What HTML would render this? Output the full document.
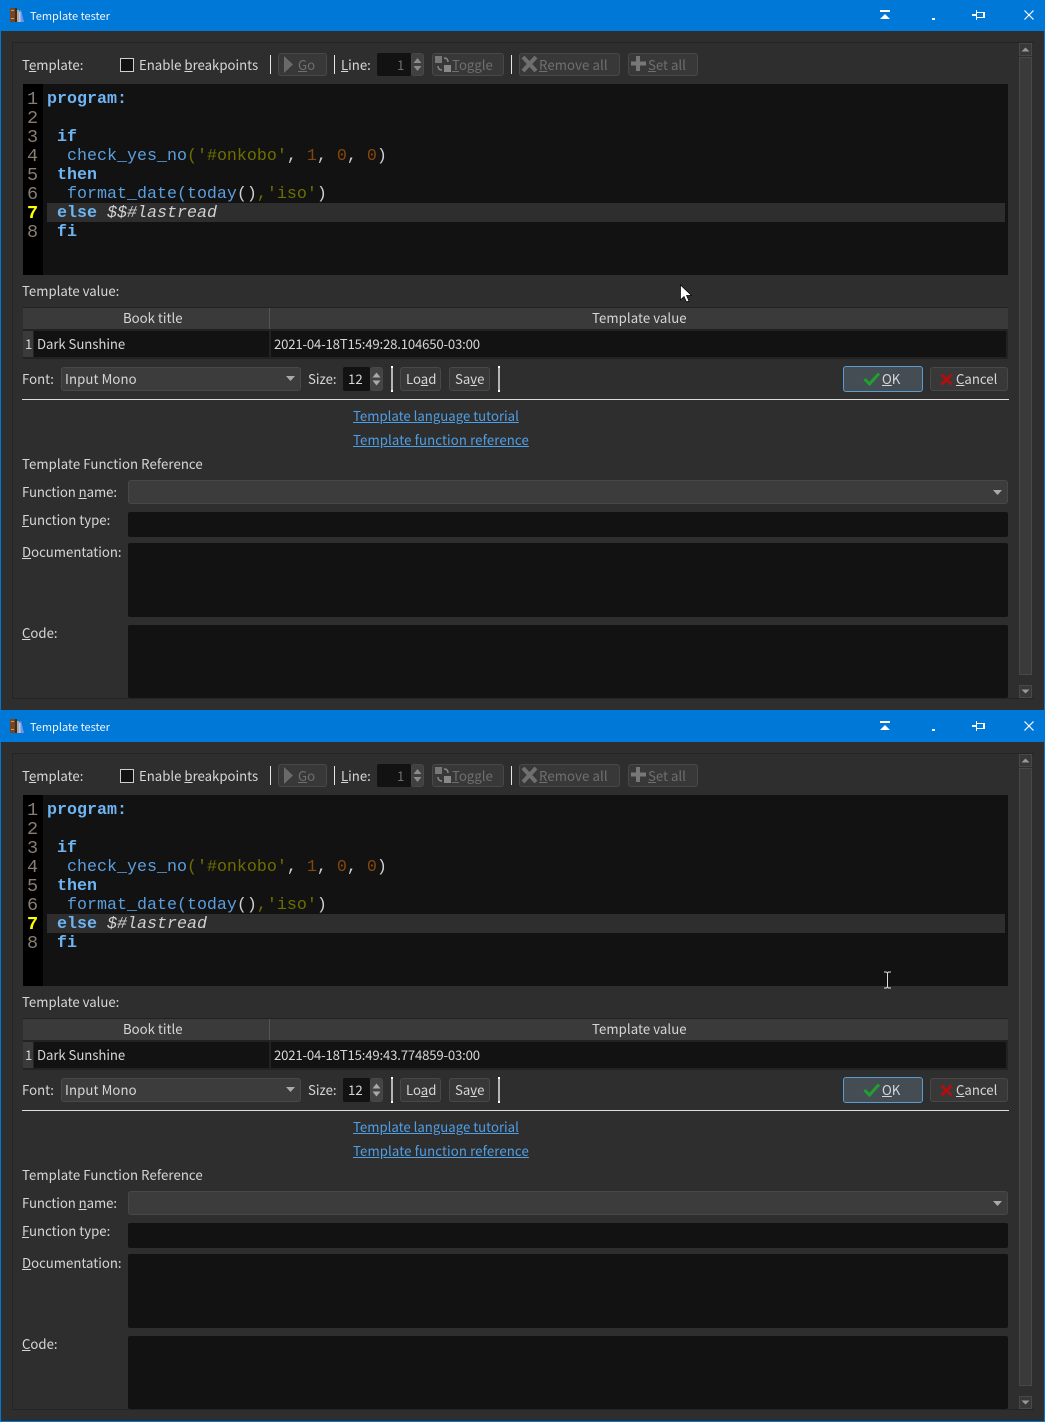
<!DOCTYPE html>
<html><head><meta charset="utf-8"><style>
html,body{margin:0;padding:0;background:#2d2d2d;width:1045px;height:1422px;overflow:hidden}
.w{position:absolute;left:0;width:1045px;height:711px;background:#2e2e2e;box-sizing:border-box;overflow:hidden}
.w *{position:absolute;box-sizing:border-box}
.w u,.w span{position:static}
.t{font:13.2px/18px "Noto Sans CJK JP","Liberation Sans",sans-serif;color:#d6d6d6;white-space:pre;margin-top:-1px}
.d{color:#6f6f6f}
.b{border:1px solid #484848;border-radius:3px;background:#383838}
.f{background:#121212;border-radius:2px}
.s{background:#e6e6e6;width:1px}
.p{width:2px;height:26px;top:366px;background:linear-gradient(#fff 0,#fff 2px,#b4b4b4 2px,#b4b4b4 24px,#fff 24px)}
.m{font:16.67px/19px "Liberation Mono",monospace;white-space:pre;color:#d0d0d0;margin-top:1px}
.k{font-weight:bold;color:#6fb5f4}
.n{color:#5b9fdf}.o{color:#6e6e00}.h{color:#84460c}
.l{color:#8a7c70;left:27px;font-size:18.500px;margin-top:1px}
a{color:#4f9fe6;text-decoration:underline}
</style></head><body>

<div class="w" style="top:0">
<div style="left:0;top:0;width:1px;height:711px;background:#0078d7"></div>
<div style="right:0;top:0;width:1px;height:711px;background:#0078d7"></div>
<div style="left:0;top:710px;width:1045px;height:1px;background:#0078d7"></div>
<div style="left:0;top:0;width:1045px;height:31px;background:#0078d7"></div>
<svg style="left:9px;top:7px" width="16" height="16"><rect x="1" y="1" width="5" height="14" fill="#7a4420"/><rect x="2" y="3" width="3" height="1" fill="#c8a060"/><rect x="2" y="11" width="3" height="1" fill="#c8a060"/><rect x="6" y="1" width="2" height="14" fill="#3a2c20"/><rect x="8" y="3" width="2" height="12" fill="#b0a890"/><path d="M10 4l2-1 3 12h-4z" fill="#6f94e8"/><path d="M10 5h1.500v10H10z" fill="#b4c8f4"/></svg>
<div class="t" style="left:30px;top:8px;color:#f0f6fc;font-size:11px">Template tester</div>
<svg style="left:875px;top:5px" width="165" height="20" fill="#fff"><rect x="5" y="5" width="10" height="2"/><path d="M5 14l5-5 5 5z"/><rect x="57" y="13" width="3" height="2"/><path d="M97 9h4V5h1v2h8v6h-8v2h-1v-4h-4zM102 8v4h6V8z"/><path d="M149.500 5.500l9 9M158.500 5.500l-9 9" stroke="#fff" fill="none" stroke-width="1.200"/></svg>
<div style="left:12px;top:42px;width:1022px;height:657px;border:1px solid #242424;border-right:0;background:#2e2e2e"></div>

<div class="t" style="left:22px;top:57px">T<u>e</u>mplate:</div>
<div style="left:120px;top:58px;width:14px;height:14px;background:#121212;border:1px solid #cfcfcf"></div>
<div class="t" style="left:139px;top:57px">Enable <u>b</u>reakpoints</div>
<div class="s" style="left:270px;top:55px;height:19px"></div>
<div class="b" style="left:278px;top:53px;width:49px;height:23px"></div>
<svg style="left:283px;top:56px" width="12" height="17"><path d="M1 0l9 8.500-9 8.500z" fill="#6a6a6a"/></svg>
<div class="t d" style="left:298px;top:57px"><u>G</u>o</div>
<div class="s" style="left:334px;top:55px;height:19px"></div>
<div class="t" style="left:341px;top:57px"><u>L</u>ine:</div>
<div class="f" style="left:377px;top:53px;width:34px;height:23px"></div>
<div class="t d" style="left:397px;top:57px">1</div>
<div class="b" style="left:411px;top:53px;width:13px;height:23px;background:#404040"></div>
<svg style="left:411px;top:53px" width="13" height="23" fill="#8a8a8a"><path d="M2.500 10l4-5 4 5zM2.500 13h8l-4 5z"/></svg>
<div class="b" style="left:432px;top:53px;width:72px;height:23px"></div>
<svg style="left:434px;top:55px" width="18" height="18"><rect x="1" y="1" width="7" height="7" fill="#777"/><rect x="10" y="10" width="7" height="7" fill="#888"/><path d="M10 3q4 0 4 4M8 15q-4 0-4-4" stroke="#888" fill="none" stroke-width="1.500"/></svg>
<div class="t d" style="left:452px;top:57px"><u>T</u>oggle</div>
<div class="s" style="left:511px;top:55px;height:19px"></div>
<div class="b" style="left:519px;top:53px;width:101px;height:23px"></div>
<svg style="left:521px;top:55px" width="17" height="18"><path d="M2 2l13 14M15 2L2 16" stroke="#6f6f6f" stroke-width="4"/></svg>
<div class="t d" style="left:539px;top:57px;letter-spacing:.1px"><u>R</u>emove all</div>
<div class="b" style="left:628px;top:53px;width:70px;height:23px"></div>
<svg style="left:630px;top:55px" width="17" height="18"><path d="M8 1v15M1 8.500h15" stroke="#777" stroke-width="4"/></svg>
<div class="t d" style="left:648px;top:57px"><u>S</u>et all</div>

<div style="left:23px;top:84px;width:985px;height:191px;background:#121212"></div>
<div style="left:23px;top:84px;width:20px;height:191px;background:#000"></div>
<div style="left:47px;top:203px;width:958px;height:19px;background:#2e2e2e"></div>
<div class="m l" style="top:89px">1</div><div class="m l" style="top:108px">2</div><div class="m l" style="top:127px">3</div><div class="m l" style="top:146px">4</div><div class="m l" style="top:165px">5</div><div class="m l" style="top:184px">6</div>
<div class="m l" style="top:203px;color:#ff0;font-weight:bold">7</div><div class="m l" style="top:222px">8</div>
<div class="m k" style="left:47px;top:89px">program:</div>
<div class="m k" style="left:57px;top:127px">if</div>
<div class="m" style="left:67px;top:146px"><span class="n">check_yes_no</span><span class="o">('#onkobo'</span>, <span class="h">1</span>, <span class="h">0</span>, <span class="h">0</span>)</div>
<div class="m k" style="left:57px;top:165px">then</div>
<div class="m" style="left:67px;top:184px"><span class="n">format_date(today</span>()<span class="o">,'iso'</span>)</div>
<div class="m" style="left:57px;top:203px"><span class="k">else</span> <i>$$#lastread</i></div>
<div class="m k" style="left:57px;top:222px">fi</div>

<div class="t" style="left:22px;top:283px">Template value:</div>
<div style="left:23px;top:307px;width:985px;height:52px;background:#222"></div>
<div style="left:23px;top:308px;width:985px;height:21px;background:#3a3a3a"></div>
<div style="left:269px;top:308px;width:1px;height:21px;background:#555"></div>
<div class="t" style="left:123px;top:310px">Book title</div>
<div class="t" style="left:592px;top:310px;letter-spacing:.07px">Template value</div>
<div style="left:23px;top:331px;width:10px;height:26px;background:#3a3a3a"></div>
<div style="left:34px;top:331px;width:235px;height:26px;background:#121212"></div>
<div style="left:271px;top:331px;width:735px;height:26px;background:#121212"></div>
<div class="t" style="left:25px;top:336px">1</div>
<div class="t" style="left:37px;top:336px;letter-spacing:-.06px">Dark Sunshine</div>
<div class="t" style="left:274px;top:336px;letter-spacing:-.19px">2021-04-18T15:49:28.104650-03:00</div>

<div class="t" style="left:22px;top:371px">Font:</div>
<div class="b" style="left:61px;top:367px;width:240px;height:24px;background:#3c3c3c"></div>
<div class="t" style="left:65px;top:371px;letter-spacing:.1px">Input Mono</div>
<svg style="left:285px;top:376px" width="11" height="6"><path d="M1 0h9L5.500 5z" fill="#aaa"/></svg>
<div class="t" style="left:308px;top:371px">Size:</div>
<div class="f" style="left:343px;top:367px;width:27px;height:24px"></div>
<div class="t" style="left:348px;top:371px">12</div>
<div class="b" style="left:370px;top:367px;width:13px;height:24px;background:#444"></div>
<svg style="left:370px;top:367px" width="13" height="24" fill="#aaa"><path d="M2.500 10.500l4-5 4 5zM2.500 13.500h8l-4 5z"/></svg>
<div class="p" style="left:391px"></div>
<div class="b" style="left:400px;top:367px;width:41px;height:24px"></div>
<div class="t" style="left:406px;top:371px">Lo<u>a</u>d</div>
<div class="b" style="left:449px;top:367px;width:41px;height:24px"></div>
<div class="t" style="left:455px;top:371px">Sa<u>v</u>e</div>
<div class="p" style="left:498px"></div>
<div class="b" style="left:843px;top:366px;width:80px;height:26px;background:#444c54;border-color:#5a9bd0"></div>
<svg style="left:863px;top:372px" width="18" height="14"><path d="M1.500 7l5 5L16 1.500" stroke="#1fa02f" stroke-width="3" fill="none"/></svg>
<div class="t" style="left:882px;top:371px"><u>O</u>K</div>
<div class="b" style="left:930px;top:367px;width:78px;height:24px"></div>
<svg style="left:940px;top:373px" width="13" height="13"><path d="M1.500 1.500l10 10M11.500 1.500l-10 10" stroke="#b00f0f" stroke-width="3"/></svg>
<div class="t" style="left:956px;top:371px"><u>C</u>ancel</div>
<div style="left:22px;top:399px;width:987px;height:1px;background:#dcdcdc"></div>

<div class="t" style="left:353px;top:408px"><a>Template language tutorial</a></div>
<div class="t" style="left:353px;top:432px;letter-spacing:.11px"><a>Template function reference</a></div>
<div class="t" style="left:22px;top:456px;letter-spacing:.07px">Template Function Reference</div>
<div class="t" style="left:22px;top:484px;letter-spacing:-.07px">Function <u>n</u>ame:</div>
<div class="b" style="left:128px;top:480px;width:880px;height:24px;background:#3c3c3c"></div>
<svg style="left:993px;top:490px" width="9" height="5"><path d="M0 0h9L4.500 5z" fill="#aaa"/></svg>
<div class="t" style="left:22px;top:512px"><u>F</u>unction type:</div>
<div class="f" style="left:128px;top:512px;width:880px;height:25px"></div>
<div class="t" style="left:22px;top:544px"><u>D</u>ocumentation:</div>
<div class="f" style="left:128px;top:543px;width:880px;height:74px"></div>
<div class="t" style="left:22px;top:625px"><u>C</u>ode:</div>
<div class="f" style="left:128px;top:625px;width:880px;height:73px"></div>

<div class="b" style="left:1019px;top:43px;width:13px;height:13px;border-radius:0"></div>
<svg style="left:1019px;top:43px" width="13" height="13"><path d="M2.500 8.500l4-4 4 4z" fill="#999"/></svg>
<div class="b" style="left:1019px;top:57px;width:13px;height:618px;border-radius:0;background:#3a3a3a"></div>
<div class="b" style="left:1019px;top:685px;width:13px;height:13px;border-radius:0"></div>
<svg style="left:1019px;top:685px" width="13" height="13"><path d="M2.500 4.500l4 4 4-4z" fill="#999"/></svg>
<svg style="left:679px;top:284px" width="13" height="19"><path d="M1.500 1v15l3.500-3.500 2.500 5.500 2.500-1-2.500-5.500h5z" fill="#fff" stroke="#000" stroke-width=".7"/></svg>
</div>

<div class="w" style="top:711px">
<div style="left:0;top:0;width:1px;height:711px;background:#0078d7"></div>
<div style="right:0;top:0;width:1px;height:711px;background:#0078d7"></div>
<div style="left:0;top:710px;width:1045px;height:1px;background:#0078d7"></div>
<div style="left:0;top:0;width:1045px;height:31px;background:#0078d7"></div>
<svg style="left:9px;top:7px" width="16" height="16"><rect x="1" y="1" width="5" height="14" fill="#7a4420"/><rect x="2" y="3" width="3" height="1" fill="#c8a060"/><rect x="2" y="11" width="3" height="1" fill="#c8a060"/><rect x="6" y="1" width="2" height="14" fill="#3a2c20"/><rect x="8" y="3" width="2" height="12" fill="#b0a890"/><path d="M10 4l2-1 3 12h-4z" fill="#6f94e8"/><path d="M10 5h1.500v10H10z" fill="#b4c8f4"/></svg>
<div class="t" style="left:30px;top:8px;color:#f0f6fc;font-size:11px">Template tester</div>
<svg style="left:875px;top:5px" width="165" height="20" fill="#fff"><rect x="5" y="5" width="10" height="2"/><path d="M5 14l5-5 5 5z"/><rect x="57" y="13" width="3" height="2"/><path d="M97 9h4V5h1v2h8v6h-8v2h-1v-4h-4zM102 8v4h6V8z"/><path d="M149.500 5.500l9 9M158.500 5.500l-9 9" stroke="#fff" fill="none" stroke-width="1.200"/></svg>
<div style="left:12px;top:42px;width:1022px;height:657px;border:1px solid #242424;border-right:0;background:#2e2e2e"></div>

<div class="t" style="left:22px;top:57px">T<u>e</u>mplate:</div>
<div style="left:120px;top:58px;width:14px;height:14px;background:#121212;border:1px solid #cfcfcf"></div>
<div class="t" style="left:139px;top:57px">Enable <u>b</u>reakpoints</div>
<div class="s" style="left:270px;top:55px;height:19px"></div>
<div class="b" style="left:278px;top:53px;width:49px;height:23px"></div>
<svg style="left:283px;top:56px" width="12" height="17"><path d="M1 0l9 8.500-9 8.500z" fill="#6a6a6a"/></svg>
<div class="t d" style="left:298px;top:57px"><u>G</u>o</div>
<div class="s" style="left:334px;top:55px;height:19px"></div>
<div class="t" style="left:341px;top:57px"><u>L</u>ine:</div>
<div class="f" style="left:377px;top:53px;width:34px;height:23px"></div>
<div class="t d" style="left:397px;top:57px">1</div>
<div class="b" style="left:411px;top:53px;width:13px;height:23px;background:#404040"></div>
<svg style="left:411px;top:53px" width="13" height="23" fill="#8a8a8a"><path d="M2.500 10l4-5 4 5zM2.500 13h8l-4 5z"/></svg>
<div class="b" style="left:432px;top:53px;width:72px;height:23px"></div>
<svg style="left:434px;top:55px" width="18" height="18"><rect x="1" y="1" width="7" height="7" fill="#777"/><rect x="10" y="10" width="7" height="7" fill="#888"/><path d="M10 3q4 0 4 4M8 15q-4 0-4-4" stroke="#888" fill="none" stroke-width="1.500"/></svg>
<div class="t d" style="left:452px;top:57px"><u>T</u>oggle</div>
<div class="s" style="left:511px;top:55px;height:19px"></div>
<div class="b" style="left:519px;top:53px;width:101px;height:23px"></div>
<svg style="left:521px;top:55px" width="17" height="18"><path d="M2 2l13 14M15 2L2 16" stroke="#6f6f6f" stroke-width="4"/></svg>
<div class="t d" style="left:539px;top:57px;letter-spacing:.1px"><u>R</u>emove all</div>
<div class="b" style="left:628px;top:53px;width:70px;height:23px"></div>
<svg style="left:630px;top:55px" width="17" height="18"><path d="M8 1v15M1 8.500h15" stroke="#777" stroke-width="4"/></svg>
<div class="t d" style="left:648px;top:57px"><u>S</u>et all</div>

<div style="left:23px;top:84px;width:985px;height:191px;background:#121212"></div>
<div style="left:23px;top:84px;width:20px;height:191px;background:#000"></div>
<div style="left:47px;top:203px;width:958px;height:19px;background:#2e2e2e"></div>
<div class="m l" style="top:89px">1</div><div class="m l" style="top:108px">2</div><div class="m l" style="top:127px">3</div><div class="m l" style="top:146px">4</div><div class="m l" style="top:165px">5</div><div class="m l" style="top:184px">6</div>
<div class="m l" style="top:203px;color:#ff0;font-weight:bold">7</div><div class="m l" style="top:222px">8</div>
<div class="m k" style="left:47px;top:89px">program:</div>
<div class="m k" style="left:57px;top:127px">if</div>
<div class="m" style="left:67px;top:146px"><span class="n">check_yes_no</span><span class="o">('#onkobo'</span>, <span class="h">1</span>, <span class="h">0</span>, <span class="h">0</span>)</div>
<div class="m k" style="left:57px;top:165px">then</div>
<div class="m" style="left:67px;top:184px"><span class="n">format_date(today</span>()<span class="o">,'iso'</span>)</div>
<div class="m" style="left:57px;top:203px"><span class="k">else</span> <i>$#lastread</i></div>
<div class="m k" style="left:57px;top:222px">fi</div>

<div class="t" style="left:22px;top:283px">Template value:</div>
<div style="left:23px;top:307px;width:985px;height:52px;background:#222"></div>
<div style="left:23px;top:308px;width:985px;height:21px;background:#3a3a3a"></div>
<div style="left:269px;top:308px;width:1px;height:21px;background:#555"></div>
<div class="t" style="left:123px;top:310px">Book title</div>
<div class="t" style="left:592px;top:310px;letter-spacing:.07px">Template value</div>
<div style="left:23px;top:331px;width:10px;height:26px;background:#3a3a3a"></div>
<div style="left:34px;top:331px;width:235px;height:26px;background:#121212"></div>
<div style="left:271px;top:331px;width:735px;height:26px;background:#121212"></div>
<div class="t" style="left:25px;top:336px">1</div>
<div class="t" style="left:37px;top:336px;letter-spacing:-.06px">Dark Sunshine</div>
<div class="t" style="left:274px;top:336px;letter-spacing:-.19px">2021-04-18T15:49:43.774859-03:00</div>

<div class="t" style="left:22px;top:371px">Font:</div>
<div class="b" style="left:61px;top:367px;width:240px;height:24px;background:#3c3c3c"></div>
<div class="t" style="left:65px;top:371px;letter-spacing:.1px">Input Mono</div>
<svg style="left:285px;top:376px" width="11" height="6"><path d="M1 0h9L5.500 5z" fill="#aaa"/></svg>
<div class="t" style="left:308px;top:371px">Size:</div>
<div class="f" style="left:343px;top:367px;width:27px;height:24px"></div>
<div class="t" style="left:348px;top:371px">12</div>
<div class="b" style="left:370px;top:367px;width:13px;height:24px;background:#444"></div>
<svg style="left:370px;top:367px" width="13" height="24" fill="#aaa"><path d="M2.500 10.500l4-5 4 5zM2.500 13.500h8l-4 5z"/></svg>
<div class="p" style="left:391px"></div>
<div class="b" style="left:400px;top:367px;width:41px;height:24px"></div>
<div class="t" style="left:406px;top:371px">Lo<u>a</u>d</div>
<div class="b" style="left:449px;top:367px;width:41px;height:24px"></div>
<div class="t" style="left:455px;top:371px">Sa<u>v</u>e</div>
<div class="p" style="left:498px"></div>
<div class="b" style="left:843px;top:366px;width:80px;height:26px;background:#444c54;border-color:#5a9bd0"></div>
<svg style="left:863px;top:372px" width="18" height="14"><path d="M1.500 7l5 5L16 1.500" stroke="#1fa02f" stroke-width="3" fill="none"/></svg>
<div class="t" style="left:882px;top:371px"><u>O</u>K</div>
<div class="b" style="left:930px;top:367px;width:78px;height:24px"></div>
<svg style="left:940px;top:373px" width="13" height="13"><path d="M1.500 1.500l10 10M11.500 1.500l-10 10" stroke="#b00f0f" stroke-width="3"/></svg>
<div class="t" style="left:956px;top:371px"><u>C</u>ancel</div>
<div style="left:22px;top:399px;width:987px;height:1px;background:#dcdcdc"></div>

<div class="t" style="left:353px;top:408px"><a>Template language tutorial</a></div>
<div class="t" style="left:353px;top:432px;letter-spacing:.11px"><a>Template function reference</a></div>
<div class="t" style="left:22px;top:456px;letter-spacing:.07px">Template Function Reference</div>
<div class="t" style="left:22px;top:484px;letter-spacing:-.07px">Function <u>n</u>ame:</div>
<div class="b" style="left:128px;top:480px;width:880px;height:24px;background:#3c3c3c"></div>
<svg style="left:993px;top:490px" width="9" height="5"><path d="M0 0h9L4.500 5z" fill="#aaa"/></svg>
<div class="t" style="left:22px;top:512px"><u>F</u>unction type:</div>
<div class="f" style="left:128px;top:512px;width:880px;height:25px"></div>
<div class="t" style="left:22px;top:544px"><u>D</u>ocumentation:</div>
<div class="f" style="left:128px;top:543px;width:880px;height:74px"></div>
<div class="t" style="left:22px;top:625px"><u>C</u>ode:</div>
<div class="f" style="left:128px;top:625px;width:880px;height:73px"></div>

<div class="b" style="left:1019px;top:43px;width:13px;height:13px;border-radius:0"></div>
<svg style="left:1019px;top:43px" width="13" height="13"><path d="M2.500 8.500l4-4 4 4z" fill="#999"/></svg>
<div class="b" style="left:1019px;top:57px;width:13px;height:618px;border-radius:0;background:#3a3a3a"></div>
<div class="b" style="left:1019px;top:685px;width:13px;height:13px;border-radius:0"></div>
<svg style="left:1019px;top:685px" width="13" height="13"><path d="M2.500 4.500l4 4 4-4z" fill="#999"/></svg>
<svg style="left:883px;top:260px" width="9" height="18"><path d="M1 1h2.500l1 1 1-1H8M4.500 2v14M1 17h2.500l1-1 1 1H8" stroke="#ddd" fill="none"/></svg>
</div>
</body></html>
